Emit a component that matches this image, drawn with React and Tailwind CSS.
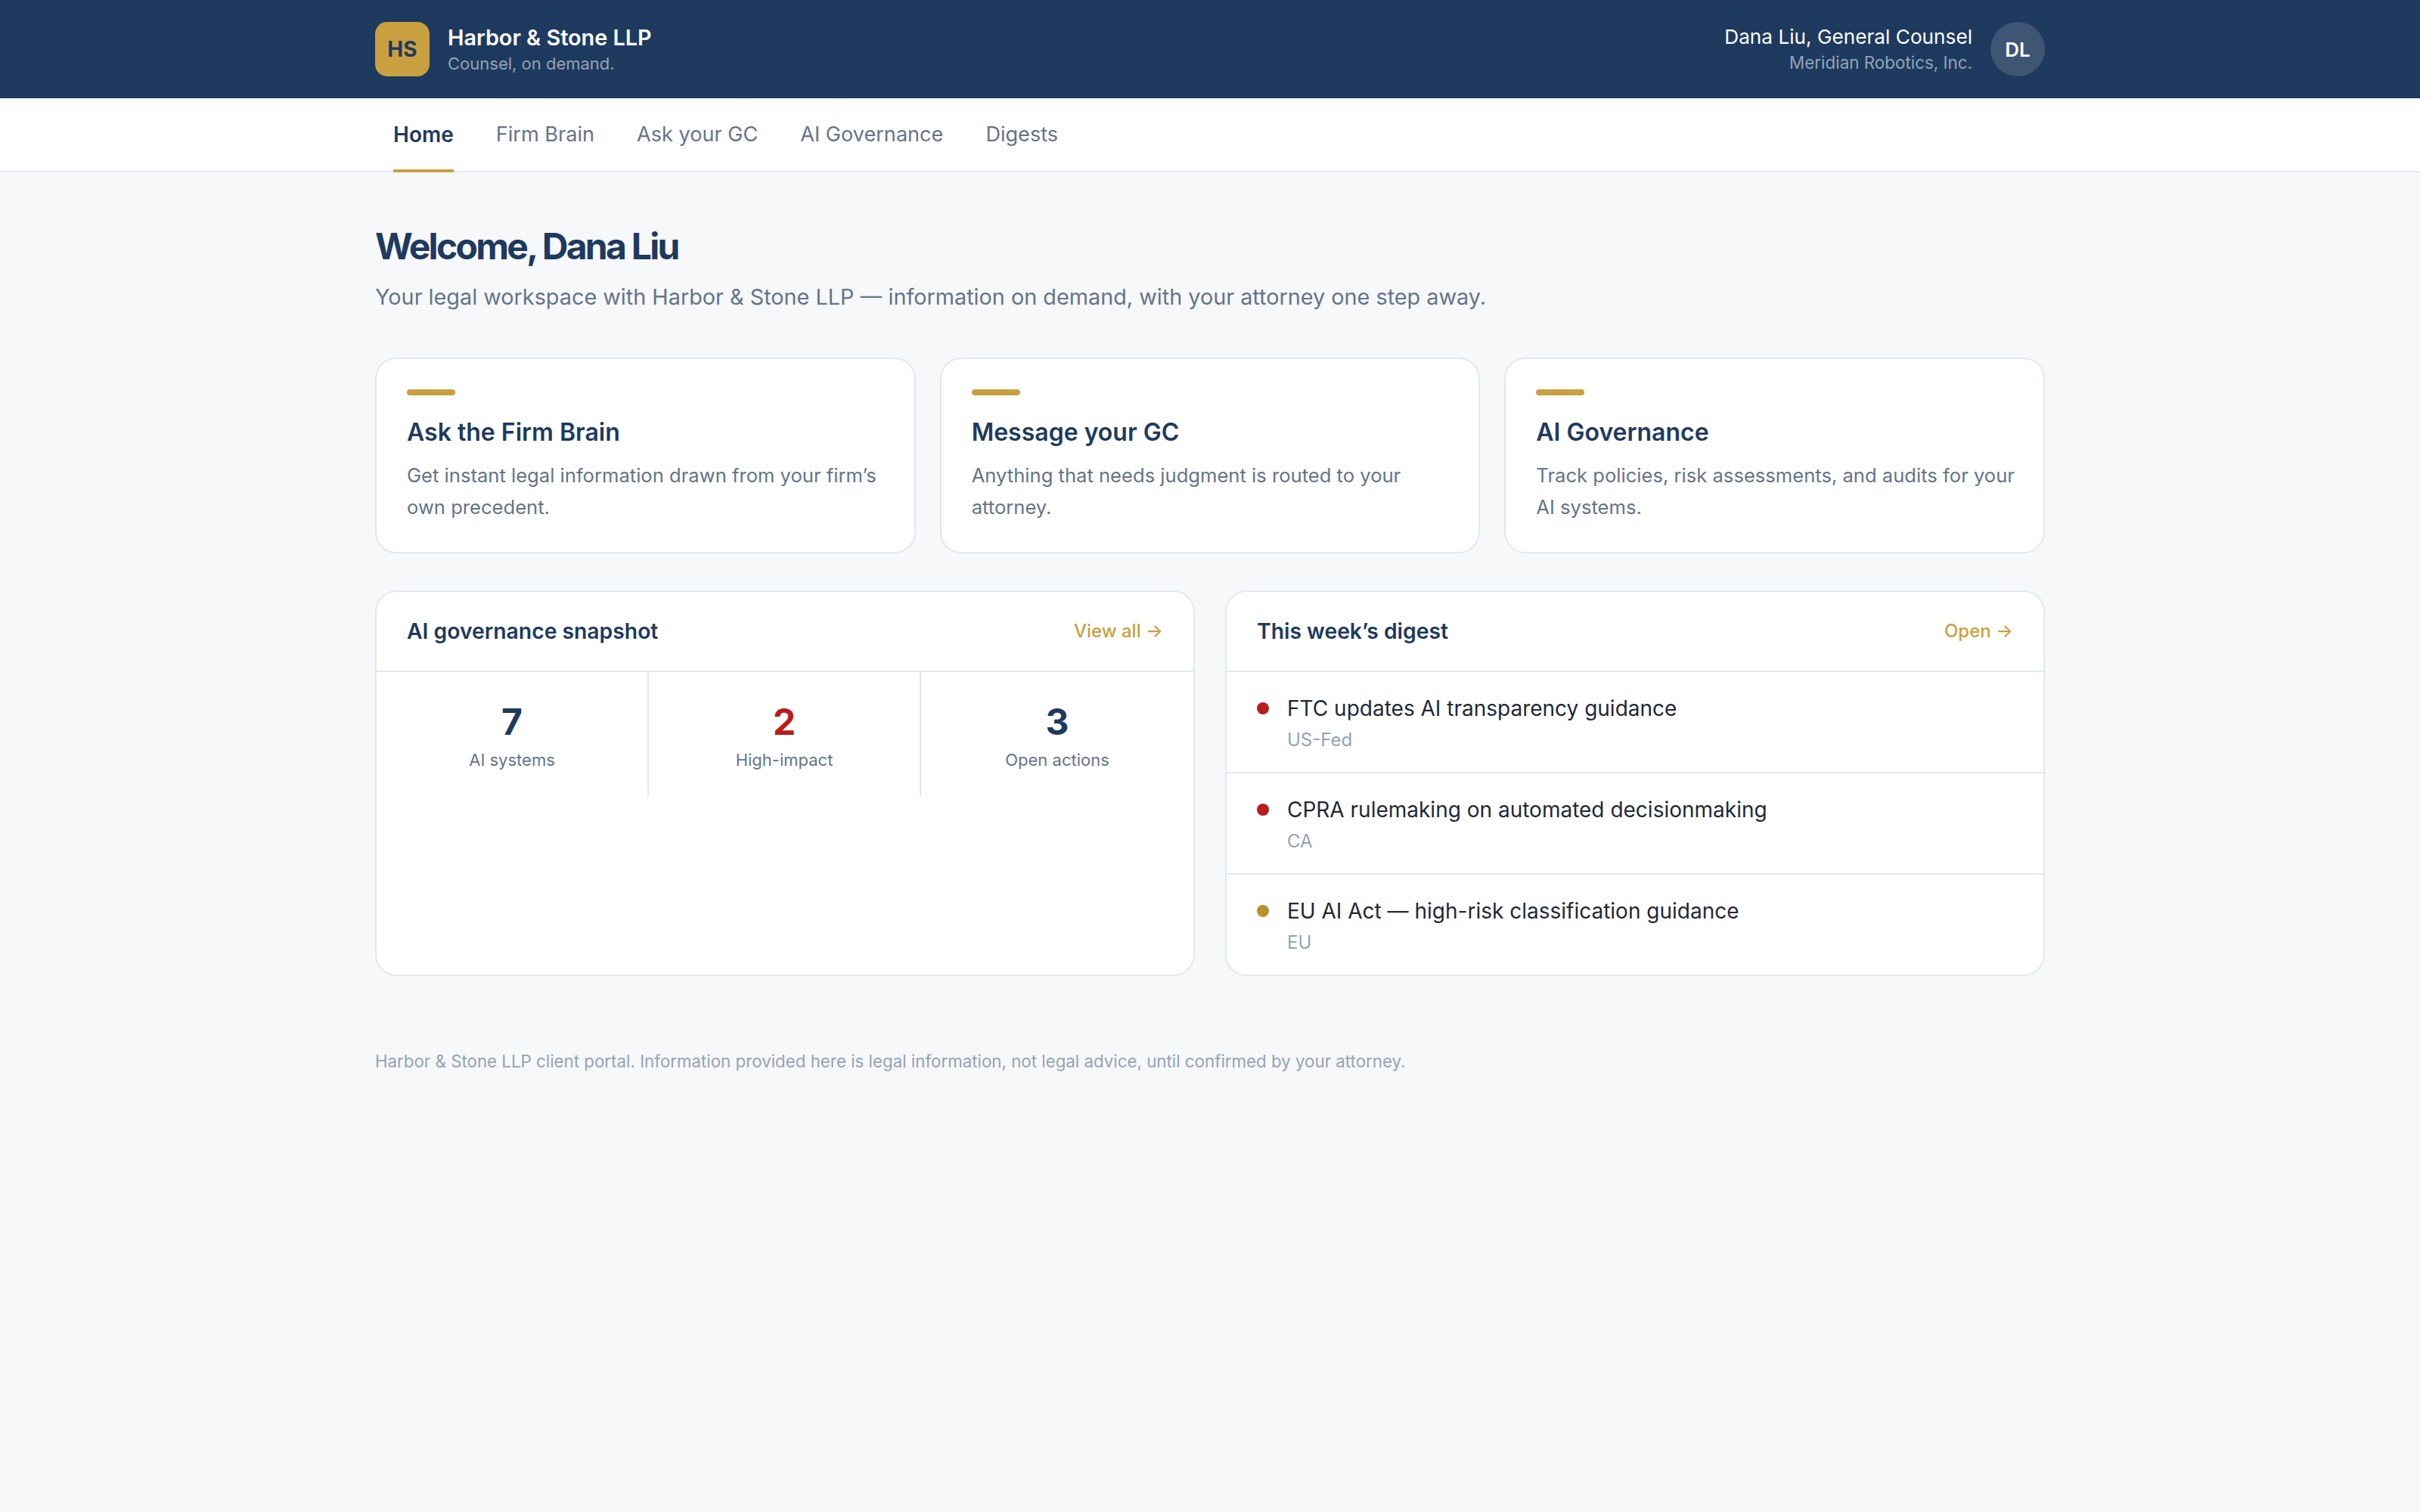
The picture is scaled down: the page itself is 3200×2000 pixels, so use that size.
const tabs = ['Home', 'Firm Brain', 'Ask your GC', 'AI Governance', 'Digests'];

const cards = [
  { title: 'Ask the Firm Brain', text: 'Get instant legal information drawn from your firm’s own precedent.' },
  { title: 'Message your GC', text: 'Anything that needs judgment is routed to your attorney.' },
  { title: 'AI Governance', text: 'Track policies, risk assessments, and audits for your AI systems.' },
];

const digest = [
  { title: 'FTC updates AI transparency guidance', tag: 'US-Fed', dot: 'bg-[#b91c1c]' },
  { title: 'CPRA rulemaking on automated decisionmaking', tag: 'CA', dot: 'bg-[#b91c1c]' },
  { title: 'EU AI Act — high-risk classification guidance', tag: 'EU', dot: 'bg-[#b8922f]' },
];

function PanelHead({ title, link }) {
  return (
    <div className="h-[106px] px-10 flex items-center justify-between border-b-2 border-[#e2e8f0]">
      <h2 className="text-[28.3px] leading-[44px] font-semibold text-[#1e3a5f]">{title}</h2>
      <a className="text-[24px] leading-[36px] font-medium text-[#c9a040]">{link}</a>
    </div>
  );
}

function Stat({ value, label, color, last }) {
  return (
    <div className={last ? 'h-[165px] pt-[42px] text-center' : 'h-[165px] pt-[42px] text-center border-r-2 border-[#e2e8f0]'}>
      <div className={`text-[48px] leading-[48px] font-bold ${color}`}>{value}</div>
      <div className="mt-[8px] text-[22px] leading-[36px] text-[#64748b]">{label}</div>
    </div>
  );
}

export default function App() {
  return (
    <div className="min-h-screen bg-[#f7f8fa] font-['Inter',sans-serif]">
      <header className="h-[130px] bg-[#1e3a5f]">
        <div className="w-[2400px] h-full mx-auto px-24 flex items-center justify-between">
          <div className="flex items-center gap-6">
            <div className="w-[72px] h-[72px] rounded-[16px] bg-[#c9a040] flex items-center justify-center text-[28px] font-bold text-[#1e3a5f]">HS</div>
            <div>
              <div className="text-[28.8px] leading-[38px] font-semibold text-white">Harbor &amp; Stone LLP</div>
              <div className="text-[22px] leading-[30px] text-[#94a3b8]">Counsel, on demand.</div>
            </div>
          </div>
          <div className="flex items-center gap-6">
            <div className="text-right">
              <div className="text-[26.2px] leading-[36px] text-white">Dana Liu, General Counsel</div>
              <div className="text-[22.4px] leading-[32px] text-[#94a3b8]">Meridian Robotics, Inc.</div>
            </div>
            <div className="w-[72px] h-[72px] rounded-full bg-[#3e5674] flex items-center justify-center text-[26px] font-semibold text-white">DL</div>
          </div>
        </div>
      </header>

      <nav className="h-[98px] bg-white border-b-2 border-[#e2e8f0]">
        <div className="w-[2400px] h-[98px] mx-auto px-[120px] flex gap-14">
          {tabs.map((t, i) => (
            <a key={t} className={i === 0
              ? 'h-[98px] pt-[2px] flex items-center border-b-4 border-[#c9a040] text-[28px] font-semibold text-[#1e3a5f]'
              : 'h-[98px] pt-[2px] flex items-center border-b-4 border-transparent text-[27.1px] text-[#64748b]'}>
              {t}
            </a>
          ))}
        </div>
      </nav>

      <main className="w-[2400px] mx-auto px-24 pt-[64px]">
        <h1 className="text-[48px] leading-[68px] font-bold tracking-[-2.7px] text-[#1e3a5f]">Welcome, Dana Liu</h1>
        <p className="mt-[11px] text-[28.8px] leading-[44px] text-[#64748b]">
          Your legal workspace with Harbor &amp; Stone LLP — information on demand, with your attorney one step away.
        </p>

        <div className="mt-[58px] grid grid-cols-3 gap-8">
          {cards.map(c => (
            <div key={c.title} className="h-[259px] bg-white border-2 border-[#e2e8f0] rounded-[28px] pt-10 pb-10 pl-10 pr-8">
              <div className="w-16 h-2 rounded-full bg-[#c9a040]" />
              <h3 className="mt-[27px] text-[32px] leading-[44px] font-semibold text-[#1e3a5f]">{c.title}</h3>
              <p className="mt-[14px] text-[25.6px] leading-[41.6px] text-[#64748b]">{c.text}</p>
            </div>
          ))}
        </div>

        <div className="mt-[49px] grid grid-cols-2 gap-10">
          <section className="h-[510px] bg-white border-2 border-[#e2e8f0] rounded-[28px] overflow-hidden">
            <PanelHead title="AI governance snapshot" link="View all →" />
            <div className="grid grid-cols-3">
              <Stat value="7" label="AI systems" color="text-[#1e3a5f]" />
              <Stat value="2" label="High-impact" color="text-[#b91c1c]" />
              <Stat value="3" label="Open actions" color="text-[#1e3a5f]" last />
            </div>
          </section>
          <section className="h-[510px] bg-white border-2 border-[#e2e8f0] rounded-[28px] overflow-hidden">
            <PanelHead title="This week’s digest" link="Open →" />
            {digest.map((d, i) => (
              <div key={d.title} className={i < 2 ? 'h-[134px] px-10 pt-[28px] flex gap-6 border-b-2 border-[#e2e8f0]' : 'h-[134px] px-10 pt-[28px] flex gap-6'}>
                <div className={`w-4 h-4 mt-[12px] rounded-full ${d.dot}`} />
                <div>
                  <div className="text-[28px] leading-[40px] text-[#1f2937]">{d.title}</div>
                  <div className="mt-[2px] text-[24px] leading-[40px] text-[#94a3b8]">{d.tag}</div>
                </div>
              </div>
            ))}
          </section>
        </div>

        <p className="mt-[95px] text-[22.3px] leading-[36px] text-[#94a3b8]">
          Harbor &amp; Stone LLP client portal. Information provided here is legal information, not legal advice, until confirmed by your attorney.
        </p>
      </main>
    </div>
  );
}
